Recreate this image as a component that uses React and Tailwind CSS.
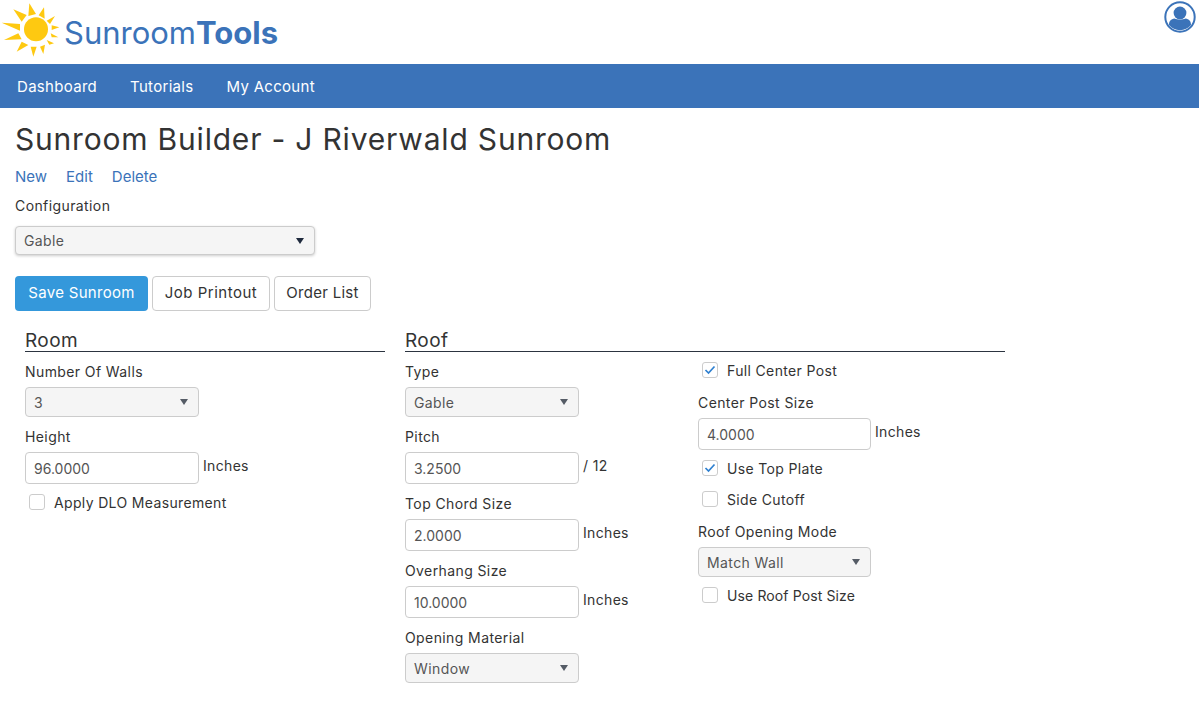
const font = { fontFamily: 'Inter, "Liberation Sans", sans-serif' };

// each ray: tip, then the two base corners
const rays = [
  '88,10 85,48 108,42', '132,22 116,46 134,56', '165,48 140,62 150,72', '178,82 155,76 155,90',
  '175,112 152,100 155,112', '162,130 140,120 148,134', '130,162 120,140 135,134', '100,170 92,140 110,140',
  '50,155 65,125 85,135', '12,120 55,100 65,118', '5,68 60,72 60,92', '40,28 65,65 80,45',
];

function Sun() {
  return (
    <svg width="62" height="58" viewBox="0 0 186 174" className="shrink-0">
      {rays.map((r) => (
        <polygon key={r} points={r} fill="#fec911" />
      ))}
      <circle cx="108" cy="88" r="36" fill="#fec911" />
    </svg>
  );
}

function UserIcon() {
  return (
    <svg width="32" height="32" viewBox="0 0 32 32">
      <circle cx="16" cy="16" r="14.7" fill="#fff" stroke="#3b73b9" strokeWidth="2" />
      <circle cx="16" cy="12" r="6.4" fill="#3b73b9" />
      <path d="M5 24c0-4 2-6 5.500-6.500 3 1.500 8 1.500 11 0C25 18 27 20 27 24c-2.800 3.300-6.500 5.200-11 5.200S7.800 27.300 5 24z" fill="#3b73b9" />
    </svg>
  );
}

function Caret({ dark }) {
  return (
    <svg width="8" height="6" viewBox="0 0 8 6">
      <path d="M0 0h8L4 6z" fill={dark ? '#1f2a3d' : '#555c66'} />
    </svg>
  );
}

function Select({ value, className = 'w-[174px] h-[30px]', dark }) {
  return (
    <div className={`flex items-center justify-between rounded border border-[#ccc] bg-[#f5f5f5] pl-2 pr-[10px] text-[14px] tracking-[0.4px] text-[#555] ${className}`}>
      <span>{value}</span>
      <Caret dark={dark} />
    </div>
  );
}

function Input({ value, className = 'w-[174px]' }) {
  return (
    <div className={`flex h-[32px] items-center rounded border border-[#ccc] bg-white pl-2 text-[14px] text-[#555] ${className}`}>
      {value}
    </div>
  );
}

function Field({ label, children, unit }) {
  return (
    <div className="mb-[10px]">
      <div className="mb-[5px] h-5 text-[14px] leading-5 tracking-[0.4px] text-[#333]">{label}</div>
      <div className="flex items-start">
        {children}
        {unit && <span className="ml-1 mt-[4px] text-[14px] leading-5 tracking-[0.33px] text-[#333]">{unit}</span>}
      </div>
    </div>
  );
}

function Check({ label, checked, className = '' }) {
  return (
    <div className={`flex h-5 items-center pl-1 text-[14px] tracking-[0.35px] text-[#333] ${className}`}>
      <span className="mr-[9px] flex h-4 w-4 items-center justify-center rounded-[3px] border border-[#ccc] bg-white">
        {checked && (
          <svg width="12" height="10" viewBox="0 0 12 10">
            <path d="M1.500 5l3 3 6-6.500" fill="none" stroke="#2f80d0" strokeWidth="1.700" />
          </svg>
        )}
      </span>
      {label}
    </div>
  );
}

function SectionHead({ title }) {
  return (
    <div className="h-[25px] border-b border-[#2c3440] text-[19px] leading-[28px] tracking-[0.4px] text-[#333]">{title}</div>
  );
}

export default function App() {
  return (
    <div className="min-h-[704px] bg-white" style={font}>
      <header className="flex h-16 items-start justify-between">
        <div className="flex items-start">
          <Sun />
          <span className="ml-[2px] mt-[15px] text-[31px] leading-9 text-[#3b73b9]">
            Sunroom<span className="font-bold">Tools</span>
          </span>
        </div>
        <div className="mr-[3px] mt-[1px]">
          <UserIcon />
        </div>
      </header>

      <nav className="flex h-[44px] items-center gap-[33px] bg-[#3b73b9] pl-[17px] pt-[2px] text-[15px] tracking-[0.3px] text-white">
        <span>Dashboard</span>
        <span>Tutorials</span>
        <span>My Account</span>
      </nav>

      <main className="px-[15px]">
        <h1 className="mt-[13px] text-[30px] leading-[36px] tracking-[0.8px] text-[#333]">Sunroom Builder - J Riverwald Sunroom</h1>
        <div className="mt-[10px] flex h-5 items-center gap-[19px] text-[15px] text-[#3b73b9]">
          <span>New</span>
          <span>Edit</span>
          <span>Delete</span>
        </div>
        <div className="mt-[9px] h-5 text-[14px] leading-5 tracking-[0.4px] text-[#333]">Configuration</div>
        <Select value="Gable" dark className="mt-[10px] h-[29px] w-[300px] shadow-[0_1px_3px_rgba(0,0,0,0.2)]" />

        <div className="mt-[21px] flex gap-1 text-[15px] tracking-[0.3px]">
          <button className="h-[35px] w-[133px] rounded bg-[#3498db] text-white">Save Sunroom</button>
          <button className="h-[35px] w-[118px] rounded border border-[#ccc] bg-white tracking-[0.5px] text-[#333]">Job Printout</button>
          <button className="h-[35px] w-[97px] rounded border border-[#ccc] bg-white text-[#333]">Order List</button>
        </div>

        <div className="mt-[16px] flex gap-5 pl-[10px]">
          <section className="w-[360px]">
            <SectionHead title="Room" />
            <div className="mt-[10px]">
              <Field label="Number Of Walls">
                <Select value="3" />
              </Field>
              <Field label="Height" unit="Inches">
                <Input value="96.0000" />
              </Field>
              <Check label="Apply DLO Measurement" className="-mt-[2px]" />
            </div>
          </section>

          <section className="w-[600px]">
            <SectionHead title="Roof" />
            <div className="mt-[10px] flex">
              <div className="w-[293px]">
                <Field label="Type">
                  <Select value="Gable" />
                </Field>
                <Field label="Pitch" unit="/ 12">
                  <Input value="3.2500" />
                </Field>
                <Field label="Top Chord Size" unit="Inches">
                  <Input value="2.0000" />
                </Field>
                <Field label="Overhang Size" unit="Inches">
                  <Input value="10.0000" />
                </Field>
                <Field label="Opening Material">
                  <Select value="Window" />
                </Field>
              </div>
              <div className="-mt-[2px]">
                <Check label="Full Center Post" checked />
                <div className="mt-[13px]">
                  <Field label="Center Post Size" unit="Inches">
                    <Input value="4.0000" className="w-[173px]" />
                  </Field>
                </div>
                <Check label="Use Top Plate" checked className="-mt-[2px]" />
                <Check label="Side Cutoff" className="mt-[11px]" />
                <div className="mt-[13px]">
                  <Field label="Roof Opening Mode">
                    <Select value="Match Wall" className="h-[30px] w-[173px]" />
                  </Field>
                </div>
                <Check label="Use Roof Post Size" className="-mt-[2px] tracking-[0.12px]!" />
              </div>
            </div>
          </section>
        </div>
      </main>
    </div>
  );
}
